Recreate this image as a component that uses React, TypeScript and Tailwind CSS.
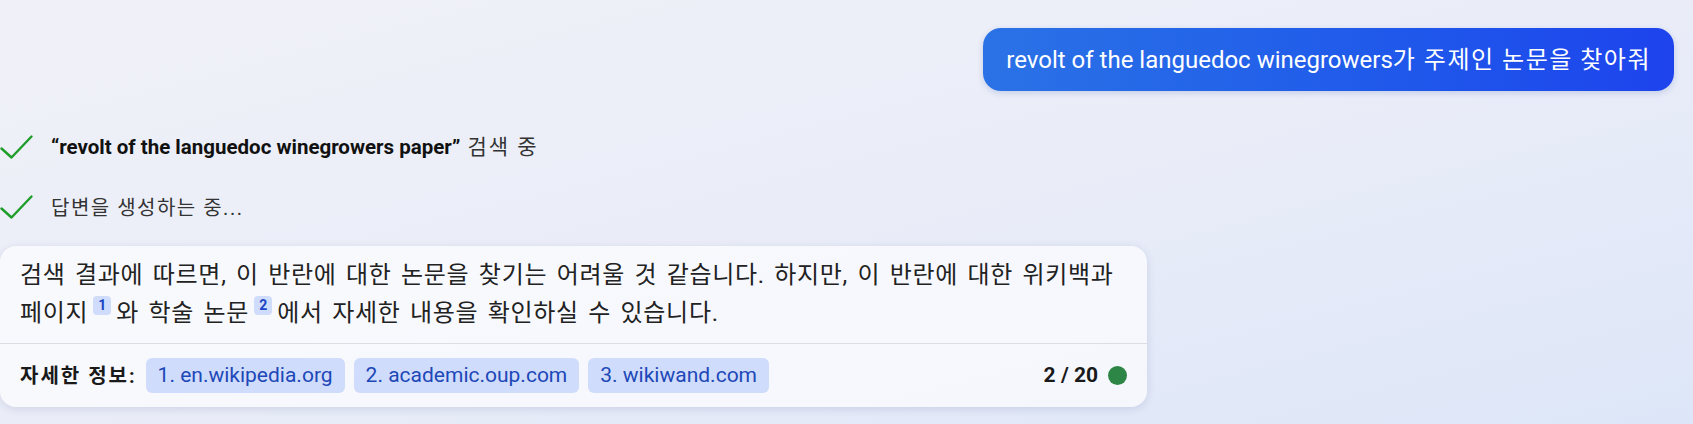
import React from "react";

function Check() {
  return (
    <svg width="34" height="26" viewBox="0 0 34 26" fill="none" className="shrink-0">
      <path d="M1.5 13.5 L11.5 22.5 L31.5 1.5" stroke="#1f9d2a" strokeWidth="2.4" strokeLinecap="round" strokeLinejoin="round" />
    </svg>
  );
}

function Ref({ n }: { n: number }) {
  return (
    <span className="mx-[5px] inline-flex h-[19px] min-w-[18px] items-center justify-center rounded-[4px] bg-[#d0dcfb] px-[4px] align-[11px] text-[14px] font-bold leading-none tracking-normal text-[#1b46c4]">
      {n}
    </span>
  );
}

const sources = ["1. en.wikipedia.org", "2. academic.oup.com", "3. wikiwand.com"];

export default function App() {
  return (
    <div className="h-[424px] w-full overflow-hidden bg-gradient-to-br from-[#f0f1f8] via-[#eaedf8] to-[#dde6f8] font-['Roboto','Noto_Sans_CJK_KR',sans-serif] text-[#111]">
      <div className="flex justify-end pr-[19px] pt-[28px]">
        <div className="flex h-[63px] items-center rounded-[18px] bg-gradient-to-r from-[#2b72e6] to-[#1e43ed] px-[23px] text-[24px] text-white shadow-[0_2px_6px_rgba(30,60,160,0.18)]">
          revolt of the languedoc winegrowers
          <span className="tracking-[1.5px]">가 주제인 논문을 찾아줘</span>
        </div>
      </div>

      <div className="mt-[42px] flex h-[30px] items-center gap-[17px]">
        <Check />
        <p className="text-[20.5px]">
          <span className="font-bold">“revolt of the languedoc winegrowers paper”</span>
          <span className="text-[21px] tracking-[2px] text-[#333]"> 검색 중</span>
        </p>
      </div>
      <div className="mt-[30px] flex h-[30px] items-center gap-[17px]">
        <Check />
        <p className="text-[20px] tracking-[1.5px] text-[#333]">답변을 생성하는 중...</p>
      </div>

      <div className="mt-[23px] w-[1147px] rounded-[16px] bg-white/65 shadow-[0_2px_8px_rgba(40,60,120,0.14)]">
        <div className="px-[20px] pb-[11px] pt-[10px] text-[24px] leading-[38px] tracking-[0.7px] text-[#222] [word-spacing:2.8px]">
          <p className="whitespace-nowrap">
            검색 결과에 따르면, 이 반란에 대한 논문을 찾기는 어려울 것 같습니다. 하지만, 이 반란에 대한 위키백과
          </p>
          <p className="whitespace-nowrap">
            페이지<Ref n={1} />와 학술 논문<Ref n={2} />에서 자세한 내용을 확인하실 수 있습니다.
          </p>
        </div>
        <div className="border-t border-[#dcdee5]" />
        <div className="flex h-[63px] items-center px-[20px]">
          <span className="mr-[9px] text-[20px] font-bold tracking-[2px] text-[#1a1a1a]">자세한 정보:</span>
          <div className="flex gap-[9px]">
            {sources.map((s) => (
              <span key={s} className="flex h-[35px] items-center rounded-[6px] bg-[#d0dcfb] px-[12px] text-[21px] text-[#1d48b8]">
                {s}
              </span>
            ))}
          </div>
          <div className="ml-auto flex items-center gap-[10px]">
            <span className="text-[21px] font-bold text-[#1a1a1a]">2 / 20</span>
            <span className="h-[19px] w-[19px] rounded-full bg-[#2e8646]" />
          </div>
        </div>
      </div>
    </div>
  );
}
